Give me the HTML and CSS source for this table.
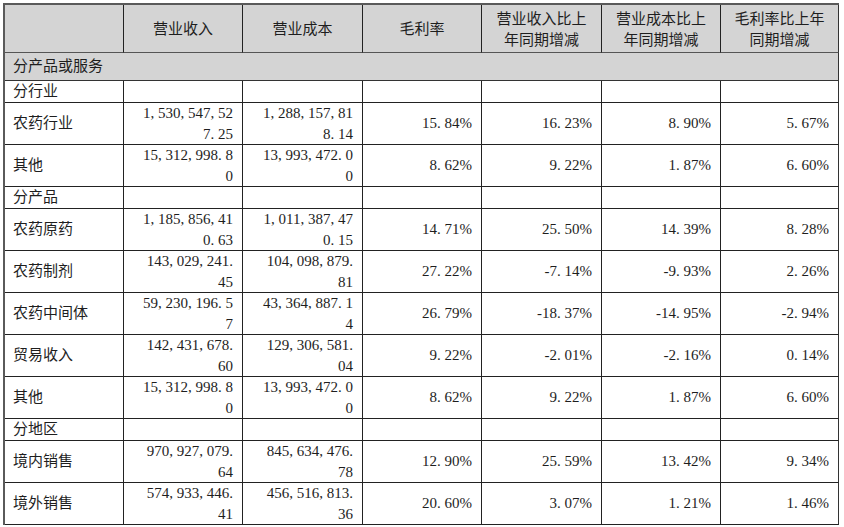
FILE: index.html
```html
<!DOCTYPE html>
<html lang="zh">
<head>
<meta charset="utf-8">
<link rel="stylesheet" href="styles.css">
</head>
<body>
<table class="report">
  <colgroup>
    <col class="w119"><col class="w119"><col class="w120"><col class="w119"><col class="w120"><col class="w119"><col class="w118">
  </colgroup>
  <thead>
    <tr class="head">
      <th></th>
      <th>营业收入</th>
      <th>营业成本</th>
      <th>毛利率</th>
      <th>营业收入比上<br>年同期增减</th>
      <th>营业成本比上<br>年同期增减</th>
      <th>毛利率比上年<br>同期增减</th>
    </tr>
  </thead>
  <tbody>
    <tr class="group"><td colspan="7">分产品或服务</td></tr>
    <tr class="sub"><td class="label">分行业</td><td></td><td></td><td></td><td></td><td></td><td></td></tr>
    <tr class="data"><td class="label">农药行业</td><td class="num">1, 530, 547, 52<br>7. 25</td><td class="num">1, 288, 157, 81<br>8. 14</td><td class="num">15. 84%</td><td class="num">16. 23%</td><td class="num">8. 90%</td><td class="num">5. 67%</td></tr>
    <tr class="data"><td class="label">其他</td><td class="num">15, 312, 998. 8<br>0</td><td class="num">13, 993, 472. 0<br>0</td><td class="num">8. 62%</td><td class="num">9. 22%</td><td class="num">1. 87%</td><td class="num">6. 60%</td></tr>
    <tr class="sub"><td class="label">分产品</td><td></td><td></td><td></td><td></td><td></td><td></td></tr>
    <tr class="data"><td class="label">农药原药</td><td class="num">1, 185, 856, 41<br>0. 63</td><td class="num">1, 011, 387, 47<br>0. 15</td><td class="num">14. 71%</td><td class="num">25. 50%</td><td class="num">14. 39%</td><td class="num">8. 28%</td></tr>
    <tr class="data"><td class="label">农药制剂</td><td class="num">143, 029, 241.<br>45</td><td class="num">104, 098, 879.<br>81</td><td class="num">27. 22%</td><td class="num">-7. 14%</td><td class="num">-9. 93%</td><td class="num">2. 26%</td></tr>
    <tr class="data"><td class="label">农药中间体</td><td class="num">59, 230, 196. 5<br>7</td><td class="num">43, 364, 887. 1<br>4</td><td class="num">26. 79%</td><td class="num">-18. 37%</td><td class="num">-14. 95%</td><td class="num">-2. 94%</td></tr>
    <tr class="data"><td class="label">贸易收入</td><td class="num">142, 431, 678.<br>60</td><td class="num">129, 306, 581.<br>04</td><td class="num">9. 22%</td><td class="num">-2. 01%</td><td class="num">-2. 16%</td><td class="num">0. 14%</td></tr>
    <tr class="data"><td class="label">其他</td><td class="num">15, 312, 998. 8<br>0</td><td class="num">13, 993, 472. 0<br>0</td><td class="num">8. 62%</td><td class="num">9. 22%</td><td class="num">1. 87%</td><td class="num">6. 60%</td></tr>
    <tr class="sub"><td class="label">分地区</td><td></td><td></td><td></td><td></td><td></td><td></td></tr>
    <tr class="data"><td class="label">境内销售</td><td class="num">970, 927, 079.<br>64</td><td class="num">845, 634, 476.<br>78</td><td class="num">12. 90%</td><td class="num">25. 59%</td><td class="num">13. 42%</td><td class="num">9. 34%</td></tr>
    <tr class="data"><td class="label">境外销售</td><td class="num">574, 933, 446.<br>41</td><td class="num">456, 516, 813.<br>36</td><td class="num">20. 60%</td><td class="num">3. 07%</td><td class="num">1. 21%</td><td class="num">1. 46%</td></tr>
  </tbody>
</table>
</body>
</html>
```
FILE: styles.css
```css
html, body {
  margin: 0;
  padding: 0;
  background: #ffffff;
}
body {
  padding: 3px 0 0 3px;
  font-family: "Liberation Serif", "Noto Sans CJK SC", serif;
  font-size: 15px;
  color: #1e1e1e;
}
.report {
  border-collapse: separate;
  border-spacing: 0;
  table-layout: fixed;
  width: 836px;
  border-left: 2px solid #5a5a5a;
  border-top: 2px solid #5a5a5a;
}
.w119 { width: 119px; }
.w120 { width: 120px; }
.w118 { width: 118px; }
.report th,
.report td {
  border-right: 1px solid #222;
  border-bottom: 1px solid #222;
  line-height: 20.5px;
  padding: 0;
  white-space: nowrap;
  vertical-align: middle;
}
.report th {
  background: #d4d4d4;
  font-weight: normal;
  text-align: center;
  padding: 4px 0 2px;
  border-bottom-color: #555;
}
.report .group td {
  background: #d4d4d4;
  padding: 3px 8px;
  line-height: 21px;
  border-bottom-color: #333;
}
.report .sub td {
  line-height: 21px;
}
.report td.label {
  padding-left: 8px;
  text-align: left;
}
.report td.num {
  text-align: right;
  padding-right: 9px;
}
.report tr > :last-child {
  border-right: 1px solid #333;
}
```
